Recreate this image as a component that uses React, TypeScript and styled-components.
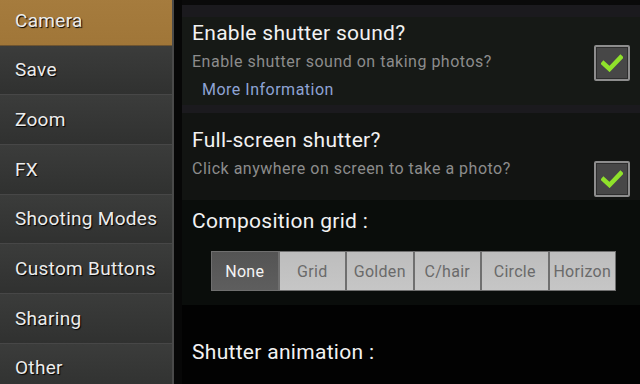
import styled, { createGlobalStyle } from "styled-components";

const GlobalStyle = createGlobalStyle`
    html, body {
        margin: 0;
        padding: 0;
        background: #000;
    }
    body {
        font-family: Roboto, "Noto Sans", sans-serif;
    }
`;

const Screen = styled.div`
    width: 640px;
    height: 384px;
    display: flex;
    overflow: hidden;
    background: #000;
`;

const Sidebar = styled.div`
    width: 174px;
    flex-shrink: 0;
    display: flex;
    flex-direction: column;
    margin-top: -4px;
    border-right: 2px solid #4a4a4a;
    box-sizing: border-box;
`;

const MenuItem = styled.div<{ $active?: boolean }>`
    height: 49.67px;
    flex-shrink: 0;
    box-sizing: border-box;
    display: flex;
    align-items: center;
    padding-left: 15px;
    font-size: 19px;
    letter-spacing: 0.3px;
    color: #ececec;
    text-shadow: 1px 1px 1px #000;
    border-bottom: 1px solid ${p => (p.$active ? "#6e5430" : "#474747")};
    background: ${p =>
        p.$active
            ? "linear-gradient(#a67c3e, #a07638)"
            : "linear-gradient(#3b3c3b, #303130)"};
`;

const Gutter = styled.div`
    width: 8px;
    flex-shrink: 0;
    background: #070707;
`;

const Panel = styled.div`
    flex: 1;
    display: flex;
    flex-direction: column;
    background: #020202;
`;

const TopEdge = styled.div`
    height: 5px;
    background: #0a0a0a;
`;

const Band = styled.div<{ $h: number }>`
    height: ${p => p.$h}px;
    flex-shrink: 0;
    background: #1b1a1e;
`;

const PrefRow = styled.div<{ $pt: number; $h: number; $bg: string }>`
    height: ${p => p.$h}px;
    box-sizing: border-box;
    padding: ${p => p.$pt}px 10px 0 10px;
    display: flex;
    justify-content: space-between;
    background: ${p => p.$bg};
`;

const TextCol = styled.div`
    display: flex;
    flex-direction: column;
`;

const Title = styled.div`
    font-size: 21px;
    line-height: 28px;
    letter-spacing: 0.3px;
    color: #f2f2f2;
`;

const Summary = styled.div`
    font-size: 16px;
    line-height: 20px;
    letter-spacing: 0.5px;
    margin-top: 5px;
    color: #8c8c8c;
`;

const MoreLink = styled.div`
    font-size: 16px;
    line-height: 28px;
    letter-spacing: 0.5px;
    margin-top: 4px;
    margin-left: 10px;
    color: #8ea3d4;
`;

const CheckBox = styled.div<{ $top: number }>`
    width: 36px;
    height: 36px;
    margin-top: ${p => p.$top}px;
    box-sizing: border-box;
    border: 2px solid #8d8d8d;
    border-radius: 2px;
    background: #474747;
    display: flex;
    align-items: center;
    justify-content: center;
    box-shadow: inset 0 0 0 1px #2e2e2e;
`;

const Section = styled.div<{ $h: number; $bg: string; $pt: number }>`
    height: ${p => p.$h}px;
    flex-shrink: 0;
    box-sizing: border-box;
    padding: ${p => p.$pt}px 10px 0 10px;
    background: ${p => p.$bg};
`;

const Segments = styled.div`
    display: flex;
    width: 405px;
    height: 40px;
    margin: 16px 0 0 19px;
    border: 1px solid #6f6f6f;
    box-sizing: border-box;
    background: #6f6f6f;
    gap: 2px;
`;

const Segment = styled.div<{ $selected?: boolean }>`
    flex: 1;
    display: flex;
    align-items: center;
    justify-content: center;
    font-size: 16px;
    letter-spacing: 0.3px;
    color: ${p => (p.$selected ? "#f4f4f4" : "#6a6a6a")};
    background: ${p =>
        p.$selected
            ? "linear-gradient(#545454, #5e5e5e)"
            : "linear-gradient(#bdbdbd, #c6c6c6)"};
`;

const Check = () => (
    <svg width="22" height="18" viewBox="0 0 22 18">
        <path d="M2.5 9.5 L8.5 15 L19.5 3.5" fill="none" stroke="#8fe22b" strokeWidth="4.5" strokeLinecap="square" />
    </svg>
);

const menu = ["Camera", "Save", "Zoom", "FX", "Shooting Modes", "Custom Buttons", "Sharing", "Other"];
const grids = ["None", "Grid", "Golden", "C/hair", "Circle", "Horizon"];

const App = () => {
    return <Screen>
        <GlobalStyle />
        <Sidebar>
            {menu.map((m, i) => <MenuItem key={m} $active={i === 0}>{m}</MenuItem>)}
        </Sidebar>
        <Gutter />
        <Panel>
            <TopEdge />
            <Band $h={12} />
            <PrefRow $pt={2} $h={88} $bg="#161916">
                <TextCol>
                    <Title>Enable shutter sound?</Title>
                    <Summary>Enable shutter sound on taking photos?</Summary>
                    <MoreLink>More Information</MoreLink>
                </TextCol>
                <CheckBox $top={26}><Check /></CheckBox>
            </PrefRow>
            <Band $h={8} />
            <PrefRow $pt={13} $h={87} $bg="#121412">
                <TextCol>
                    <Title>Full-screen shutter?</Title>
                    <Summary>Click anywhere on screen to take a photo?</Summary>
                </TextCol>
                <CheckBox $top={35}><Check /></CheckBox>
            </PrefRow>
            <Section $h={105} $bg="#0a0d0b" $pt={7}>
                <Title>Composition grid :</Title>
                <Segments>
                    {grids.map((g, i) => <Segment key={g} $selected={i === 0}>{g}</Segment>)}
                </Segments>
            </Section>
            <Section $h={79} $bg="#020202" $pt={33}>
                <Title>Shutter animation :</Title>
            </Section>
        </Panel>
    </Screen>
}

export default App;
